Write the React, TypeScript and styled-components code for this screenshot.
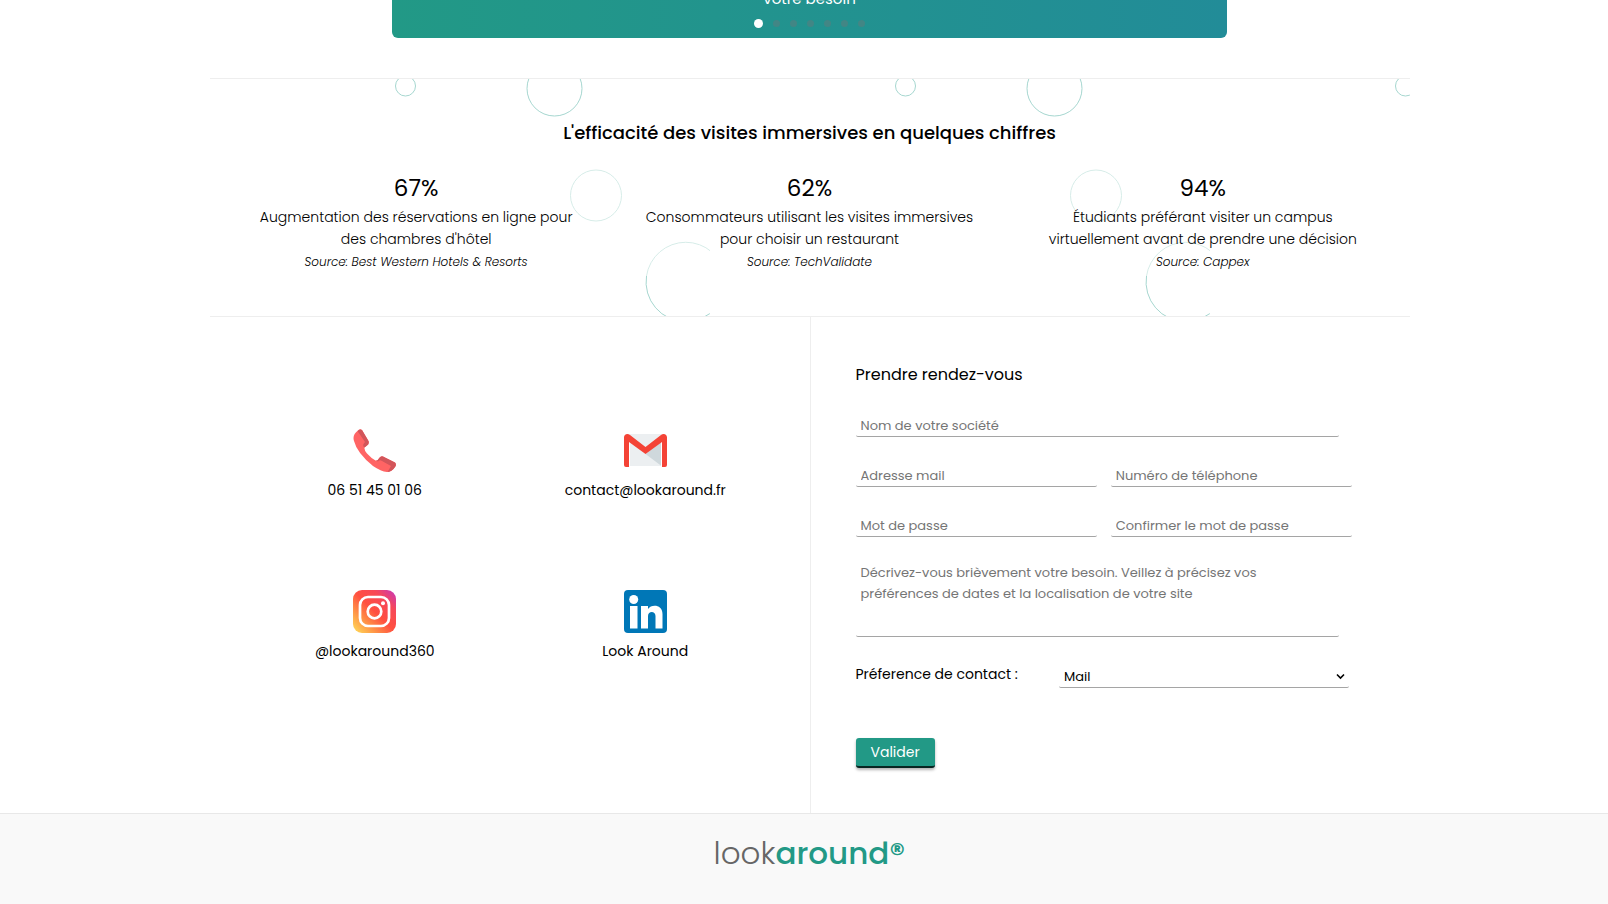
import React from "react";
import styled, { createGlobalStyle } from "styled-components";

const GlobalStyle = createGlobalStyle`
  *, *::before, *::after { box-sizing: border-box; }
  body {
    margin: 0;
    background: #fff;
    color: #000;
    font-family: Poppins, Inter, "Open Sans", sans-serif;
    font-size: 14px;
    line-height: 22px;
  }
  h2, h3, p { margin: 0; }
  input, select, textarea, button { font: inherit; margin: 0; }
`;

const Page = styled.div`
  overflow-x: hidden;
`;

const Content = styled.main`
  padding-left: 11px;
`;

const Card = styled.section`
  display: flex;
  flex-direction: column;
  justify-content: flex-end;
  align-items: center;
  max-width: 835px;
  height: 38px;
  margin: 0 auto 40px;
  overflow: hidden;
  border-radius: 0 0 6px 6px;
  background: linear-gradient(90deg, #229986, #228c98);
  color: #fff;
`;

const CardText = styled.p`
  flex: none;
  font-size: 15px;
  line-height: 24px;
`;

const Dots = styled.div`
  display: flex;
  flex: none;
  align-items: center;
  gap: 10px;
  padding: 8px 0 10px;
`;

const Dot = styled.button<{ $active?: boolean }>`
  width: ${(p) => (p.$active ? 9 : 7)}px;
  height: ${(p) => (p.$active ? 9 : 7)}px;
  padding: 0;
  border: 0;
  border-radius: 50%;
  background: ${(p) => (p.$active ? "#fff" : "#428685")};
`;

const Stats = styled.section`
  position: relative;
  max-width: 1200px;
  margin: 0 auto;
  padding: 40px 10px 42px;
  border-top: 1px solid #eee;
  border-bottom: 1px solid #eee;
  text-align: center;
`;

const Bubbles = styled.svg`
  position: absolute;
  inset: 0;
  width: 100%;
  height: 100%;
`;

const StatsTitle = styled.h2`
  position: relative;
  margin-bottom: 26px;
  font-size: 18px;
  font-weight: 500;
  line-height: 28px;
`;

const StatGrid = styled.div`
  position: relative;
  display: grid;
  grid-template-columns: repeat(3, 1fr);
`;

const Stat = styled.article`
  padding: 0 30px;
  font-weight: 300;
`;

const Figure = styled.p`
  margin-bottom: 3px;
  font-size: 23px;
  font-weight: 400;
  line-height: 30px;
`;

const Source = styled.p`
  font-size: 12px;
  font-style: italic;
  line-height: 24px;
`;

const Contact = styled.section`
  display: grid;
  grid-template-columns: 1fr 1fr;
  max-width: 1200px;
  margin: 0 auto;
`;

const Links = styled.div`
  display: grid;
  grid-template-columns: 1fr 1fr;
  align-content: center;
  padding: 0 29px 0 30px;
`;

const LinkItem = styled.a`
  display: flex;
  flex-direction: column;
  align-items: center;
  gap: 7px;
  padding: 25px 0 64px;
  color: inherit;
  text-decoration: none;

  svg {
    width: 43px;
    height: 43px;
  }
`;

const Form = styled.form`
  display: flex;
  flex-direction: column;
  align-items: flex-start;
  gap: 22px;
  padding: 45px;
  border-left: 1px solid #eee;
`;

const FormTitle = styled.h3`
  font-size: 16px;
  font-weight: 400;
  line-height: 25px;
`;

const Field = styled.input`
  width: 95%;
  height: 28px;
  padding: 8px 5px 1px;
  border: 0;
  border-bottom: 1px solid #a5a5a5;
  border-radius: 2px;
  background: transparent;
  font-size: 13px;
  line-height: 18px;
  &::placeholder { color: #757575; }
`;

const Pair = styled.div`
  display: grid;
  grid-template-columns: 1fr 1fr;
  gap: 14px;
  width: calc(95% + 13px);

  ${Field} { width: 100%; }
`;

const Message = styled.textarea`
  width: 95%;
  height: 78px;
  padding: 3px 60px 3px 5px;
  border: 0;
  border-bottom: 1px solid #a5a5a5;
  border-radius: 2px;
  background: transparent;
  font-size: 13px;
  line-height: 21px;
  resize: none;
  &::placeholder { color: #757575; }
`;

const Preference = styled.div`
  display: flex;
  justify-content: space-between;
  width: calc(95% + 10px);
  margin-bottom: 28px;
`;

const PreferenceLabel = styled.label`
  padding-top: 4px;
`;

const SelectBox = styled.div`
  position: relative;
  width: 290px;

  svg {
    position: absolute;
    top: 13px;
    right: 4px;
    width: 9px;
    height: 9px;
    pointer-events: none;
  }
`;

const Select = styled.select`
  display: block;
  width: 100%;
  height: 29px;
  padding: 8px 5px 1px;
  appearance: none;
  border: 0;
  border-bottom: 1px solid #a5a5a5;
  border-radius: 2px;
  background: transparent;
  color: #000;
  font-size: 13px;
  line-height: 19px;
`;

const Submit = styled.button`
  height: 30px;
  padding: 0 15px;
  border: 0;
  border-bottom: 2px solid #082622;
  border-radius: 3px;
  background: #229986;
  box-shadow: 0 2px 3px rgba(0, 0, 0, 0.3);
  color: #fff;
`;

const Footer = styled.footer`
  padding: 20px 0 31px 11px;
  border-top: 1px solid #e8e8e8;
  background: #f9f9f9;
  text-align: center;
`;

const Logo = styled.p`
  color: #666;
  font-size: 31px;
  font-weight: 300;
  line-height: 39px;

  strong {
    color: #229986;
    font-weight: 500;
  }
`;

const BubblePattern = () => (
  <Bubbles aria-hidden="true">
    <defs>
      <pattern id="bubbles" width="500" height="500" patternUnits="userSpaceOnUse">
        <g fill="none" strokeWidth="1">
          <circle cx="195.5" cy="7" r="10" stroke="#a5d6cf" />
          <circle cx="344.5" cy="9.5" r="27.5" stroke="#a5d6cf" />
          <circle cx="386" cy="116.5" r="25.5" stroke="#d6ece8" />
          <path d="M436.500 197A39.7 39.7 0 0 1 515 197" stroke="#d6ece8" />
          <path d="M436.500 197A39.7 39.7 0 1 0 515 197" stroke="#a5d6cf" />
        </g>
      </pattern>
    </defs>
    <rect width="100%" height="100%" fill="url(#bubbles)" />
  </Bubbles>
);

const PhoneIcon = () => (
  <svg viewBox="0 0 43 43" aria-hidden="true">
    <path
      d="M5 1.500Q7-.6 9 1L15.500 12Q16.500 15 14 16.500L11.500 18.500Q11 21 14 24.500 18 29 22.500 31.500 24.500 32 25.500 30 27.500 26.500 30 27.500L42 33.500Q43.800 35.500 42 38 39 43 34 43 28 42.500 20 37 4 24 1 12-1 6 5 1.500Z"
      fill="#ff6464"
    />
    <path
      d="M4.500 2Q7-.6 9 1L15.500 12Q16.500 15 14 16.500L11.500 18.500Q9.500 17 10.500 15L12 13ZM23 31.500Q25 31.500 25.500 30 27.500 26.500 30 27.500L42 33.500Q43.800 35.500 42 38 39 42.500 34.500 43L38 37 29 32Q26.500 30.500 25 32.500Z"
      fill="#d2555a"
    />
  </svg>
);

const MailIcon = () => (
  <svg viewBox="0 0 43 43" aria-hidden="true">
    <path d="M4 5h35v33H4Z" fill="#eceff1" />
    <path d="M21.500 25 37.500 12v25Z" fill="#cfd8dc" />
    <path d="M4 37.500h35" stroke="#fff" />
    <path d="M5.500 12v25M37.500 12v25" stroke="#fff" strokeWidth="1" />
    <path d="M0 8.500C0 5 3.500 4 6 6l15.500 12L37 6c2.500-2 6-1 6 2.500V36q0 2-2 2h-3V13L21.500 25 5 13v25H2q-2 0-2-2Z" fill="#f44336" />
  </svg>
);

const InstagramIcon = () => (
  <svg viewBox="0 0 43 43" aria-hidden="true">
    <defs>
      <linearGradient id="insta" x1="0" y1="1" x2="1" y2="0">
        <stop offset="0" stopColor="#ffe15a" />
        <stop offset=".25" stopColor="#ff9a48" />
        <stop offset=".5" stopColor="#ff5040" />
        <stop offset=".75" stopColor="#f74858" />
        <stop offset="1" stopColor="#c536c0" />
      </linearGradient>
    </defs>
    <rect width="43" height="43" rx="9" fill="url(#insta)" />
    <g fill="none" stroke="#fff" strokeWidth="2.700">
      <rect x="7" y="7" width="29" height="29" rx="8" />
      <circle cx="21.500" cy="21.500" r="6.800" />
    </g>
    <circle cx="30" cy="13.200" r="2" fill="#fff" />
  </svg>
);

const LinkedinIcon = () => (
  <svg viewBox="0 0 43 43" aria-hidden="true">
    <rect width="43" height="43" rx="4" fill="#0077b7" />
    <circle cx="9.700" cy="9.500" r="4.500" fill="#fff" />
    <path d="M6 16h7.500v22.500H6ZM17 16h7v3c3-5 14.500-5 14.500 5v14.500H31.500V26c0-5.500-7.500-5.500-7.500 0v12.500h-7Z" fill="#fff" />
  </svg>
);

const stats = [
  { value: "67%", text: "Augmentation des réservations en ligne pour des chambres d'hôtel", source: "Best Western Hotels & Resorts" },
  { value: "62%", text: "Consommateurs utilisant les visites immersives pour choisir un restaurant", source: "TechValidate" },
  { value: "94%", text: "Étudiants préférant visiter un campus virtuellement avant de prendre une décision", source: "Cappex" },
];

const links = [
  { label: "06 51 45 01 06", href: "tel:+33651450106", Icon: PhoneIcon },
  { label: "contact@lookaround.fr", href: "mailto:contact@lookaround.fr", Icon: MailIcon },
  { label: "@lookaround360", href: "#instagram", Icon: InstagramIcon },
  { label: "Look Around", href: "#linkedin", Icon: LinkedinIcon },
];

export default function App() {
  return (
    <Page>
      <GlobalStyle />
      <Content>
        <Card>
          <CardText>votre besoin</CardText>
          <Dots>
            {[0, 1, 2, 3, 4, 5, 6].map((i) => (
              <Dot key={i} type="button" $active={i === 0} aria-label={`Diapositive ${i + 1}`} />
            ))}
          </Dots>
        </Card>

        <Stats>
          <BubblePattern />
          <StatsTitle>L'efficacité des visites immersives en quelques chiffres</StatsTitle>
          <StatGrid>
            {stats.map((s) => (
              <Stat key={s.value}>
                <Figure>{s.value}</Figure>
                <p>{s.text}</p>
                <Source>Source: {s.source}</Source>
              </Stat>
            ))}
          </StatGrid>
        </Stats>

        <Contact>
          <Links>
            {links.map(({ label, href, Icon }) => (
              <LinkItem key={label} href={href}>
                <Icon />
                {label}
              </LinkItem>
            ))}
          </Links>
          <Form onSubmit={(e) => e.preventDefault()}>
            <FormTitle>Prendre rendez-vous</FormTitle>
            <Field type="text" aria-label="Nom de votre société" placeholder="Nom de votre société" />
            <Pair>
              <Field type="email" aria-label="Adresse mail" placeholder="Adresse mail" />
              <Field type="tel" aria-label="Numéro de téléphone" placeholder="Numéro de téléphone" />
            </Pair>
            <Pair>
              <Field type="password" aria-label="Mot de passe" placeholder="Mot de passe" />
              <Field type="password" aria-label="Confirmer le mot de passe" placeholder="Confirmer le mot de passe" />
            </Pair>
            <Message
              aria-label="Votre besoin"
              placeholder="Décrivez-vous brièvement votre besoin. Veillez à précisez vos préférences de dates et la localisation de votre site"
            />
            <Preference>
              <PreferenceLabel htmlFor="preference">Préference de contact :</PreferenceLabel>
              <SelectBox>
                <Select id="preference" defaultValue="Mail">
                  <option>Mail</option>
                  <option>Téléphone</option>
                </Select>
                <svg viewBox="0 0 9 9" aria-hidden="true">
                  <path d="M1 2.500 4.500 6 8 2.500" fill="none" stroke="#000" strokeWidth="1.600" />
                </svg>
              </SelectBox>
            </Preference>
            <Submit type="submit">Valider</Submit>
          </Form>
        </Contact>
      </Content>
      <Footer>
        <Logo>
          look<strong>around®</strong>
        </Logo>
      </Footer>
    </Page>
  );
}
